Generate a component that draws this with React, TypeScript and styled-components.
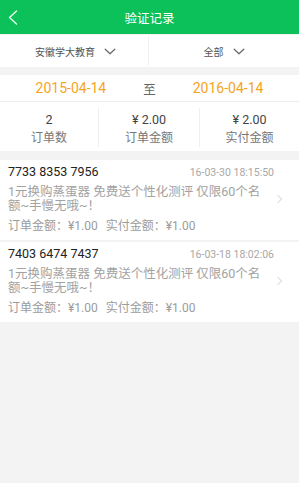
import styled, { createGlobalStyle } from "styled-components";

const GlobalStyle = createGlobalStyle`
  body {
    margin: 0;
    background: #ffffff;
    font-family: Roboto, "Noto Sans CJK SC", sans-serif;
  }
`;

const Screen = styled.div`
  width: 299px;
  height: 483px;
  background: #f3f3f3;
  display: flex;
  flex-direction: column;
  overflow: hidden;
`;

const Header = styled.div`
  height: 34px;
  background: #0cc05a;
  display: grid;
  grid-template-columns: 40px 1fr 40px;
  align-items: center;
`;

const BackButton = styled.div`
  display: flex;
  align-items: center;
  padding-left: 8px;
  height: 100%;
`;

const Title = styled.h1`
  margin: 0;
  text-align: center;
  color: #ffffff;
  font-size: 12.5px;
  font-weight: 400;
`;

const FilterBar = styled.div`
  height: 32px;
  margin-top: 1px;
  background: #ffffff;
  display: grid;
  grid-template-columns: 149px 1fr;
`;

const FilterItem = styled.div<{ divider?: boolean }>`
  display: flex;
  align-items: center;
  justify-content: center;
  gap: 9px;
  font-size: 10px;
  color: #555555;
  border-right: ${(p) => (p.divider ? "1px solid #f0f0f0" : "none")};
  margin: 1px 0;
  padding-left: ${(p) => (p.divider ? "3px" : "0")};
`;

const DateRow = styled.div`
  margin-top: 8px;
  height: 26px;
  background: #ffffff;
  display: flex;
  align-items: center;
  justify-content: center;
  gap: 37px;
  border-bottom: 1px solid #ececec;
`;

const DateText = styled.span`
  color: #f5a41f;
  font-size: 14px;
`;

const DateSep = styled.span`
  color: #666666;
  font-size: 12.5px;
`;

const Stats = styled.div`
  height: 49px;
  background: #ffffff;
  display: grid;
  grid-template-columns: 98px 101px 1fr;
`;

const StatCell = styled.div<{ divider?: boolean }>`
  margin: 6px 0 4px;
  padding-top: 4px;
  display: flex;
  flex-direction: column;
  align-items: center;
  gap: 4px;
  border-left: ${(p) => (p.divider ? "1px solid #efefef" : "none")};
`;

const StatValue = styled.span`
  font-size: 12.5px;
  color: #444444;
  line-height: 15px;
`;

const StatLabel = styled.span`
  font-size: 12px;
  color: #777777;
  line-height: 15px;
`;

const List = styled.div`
  margin-top: 9px;
  display: flex;
  flex-direction: column;
  gap: 2px;
`;

const Card = styled.div`
  background: #ffffff;
  height: 80px;
  box-sizing: border-box;
  padding: 4px 0 6px 8px;
  display: flex;
`;

const CardMain = styled.div`
  width: 266px;
`;

const CardTop = styled.div`
  display: flex;
  justify-content: space-between;
  align-items: baseline;
  height: 16px;
`;

const OrderNo = styled.span`
  font-size: 12.5px;
  color: #222222;
  line-height: 16px;
`;

const OrderTime = styled.span`
  font-size: 10.5px;
  color: #a8a8a8;
`;

const Desc = styled.p`
  margin: 5px 0 0;
  width: 258px;
  font-size: 12.5px;
  line-height: 14px;
  color: #a2a2a2;
`;

const Price = styled.div`
  margin-top: 5px;
  font-size: 12px;
  line-height: 16px;
  color: #9c9c9c;
  display: flex;
  gap: 8px;
`;

const ArrowCol = styled.div`
  flex: 1;
  padding: 25px 0 0 2px;
`;

const Chevron = ({ color, w, h, sw }: { color: string; w: number; h: number; sw: number }) => (
  <svg width={w} height={h} viewBox={`0 0 ${w} ${h}`} fill="none">
    <polyline
      points={`${sw},${sw} ${w / 2},${h - sw} ${w - sw},${sw}`}
      stroke={color}
      strokeWidth={sw}
      strokeLinejoin="round"
      strokeLinecap="round"
    />
  </svg>
);

const RightChevron = () => (
  <svg width="7" height="10" viewBox="0 0 7 10" fill="none">
    <polyline points="1.5,1 5.5,5 1.5,9" stroke="#cccccc" strokeWidth="1" />
  </svg>
);

const orders = [
  { no: "7733 8353 7956", time: "16-03-30 18:15:50" },
  { no: "7403 6474 7437", time: "16-03-18 18:02:06" },
];

export default function App() {
  return (
    <>
      <GlobalStyle />
      <Screen>
        <Header>
          <BackButton>
            <svg width="10" height="15" viewBox="0 0 10 15" fill="none">
              <polyline
                points="8.5,1 1.5,7.5 8.5,14"
                stroke="#eafff0"
                strokeWidth="1.4"
                strokeLinecap="round"
                strokeLinejoin="round"
              />
            </svg>
          </BackButton>
          <Title>验证记录</Title>
          <span />
        </Header>

        <FilterBar>
          <FilterItem divider>
            安徽学大教育
            <Chevron color="#666" w={12} h={7} sw={1.2} />
          </FilterItem>
          <FilterItem>
            全部
            <Chevron color="#666" w={12} h={7} sw={1.2} />
          </FilterItem>
        </FilterBar>

        <DateRow>
          <DateText>2015-04-14</DateText>
          <DateSep>至</DateSep>
          <DateText>2016-04-14</DateText>
        </DateRow>

        <Stats>
          <StatCell>
            <StatValue>2</StatValue>
            <StatLabel>订单数</StatLabel>
          </StatCell>
          <StatCell divider>
            <StatValue>¥ 2.00</StatValue>
            <StatLabel>订单金额</StatLabel>
          </StatCell>
          <StatCell divider>
            <StatValue>¥ 2.00</StatValue>
            <StatLabel>实付金额</StatLabel>
          </StatCell>
        </Stats>

        <List>
          {orders.map((o) => (
            <Card key={o.no}>
              <CardMain>
                <CardTop>
                  <OrderNo>{o.no}</OrderNo>
                  <OrderTime>{o.time}</OrderTime>
                </CardTop>
                <Desc>1元换购蒸蛋器 免费送个性化测评 仅限60个名额~手慢无哦~！</Desc>
                <Price>
                  <span>订单金额：¥1.00</span>
                  <span>实付金额：¥1.00</span>
                </Price>
              </CardMain>
              <ArrowCol>
                <RightChevron />
              </ArrowCol>
            </Card>
          ))}
        </List>
      </Screen>
    </>
  );
}
